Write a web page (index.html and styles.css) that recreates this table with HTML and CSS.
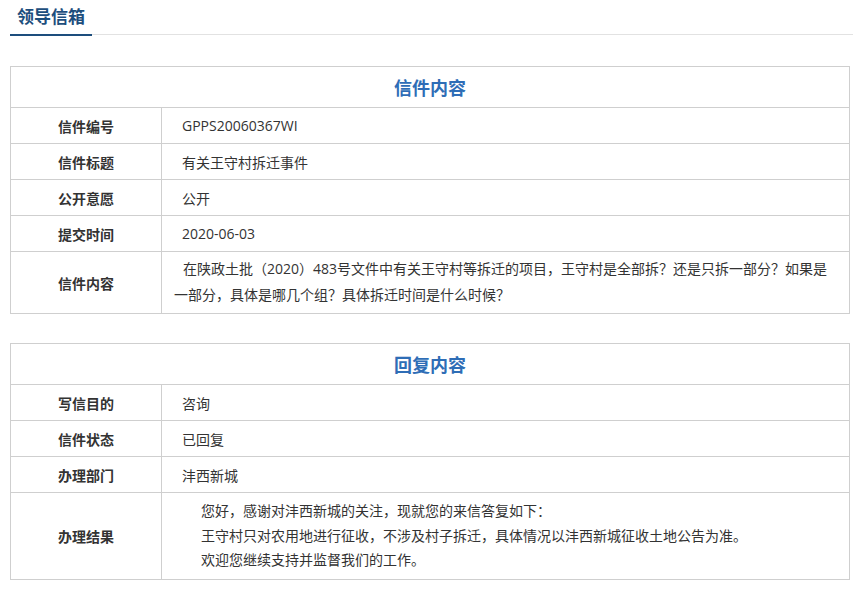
FILE: index.html
```html
<!DOCTYPE html>
<html lang="zh-CN">
<head>
<meta charset="utf-8">
<title>领导信箱</title>
<link rel="stylesheet" href="styles.css">
</head>
<body>
<div class="page">
  <div class="page-head">
    <h1 class="page-title">领导信箱</h1>
    <div class="page-rule"></div>
  </div>

  <table class="info">
    <colgroup><col class="col-label"><col class="col-value"></colgroup>
    <tr><th class="caption" colspan="2">信件内容</th></tr>
    <tr><td class="label">信件编号</td><td class="value">GPPS20060367WI</td></tr>
    <tr><td class="label">信件标题</td><td class="value">有关王守村拆迁事件</td></tr>
    <tr><td class="label">公开意愿</td><td class="value">公开</td></tr>
    <tr><td class="label">提交时间</td><td class="value">2020-06-03</td></tr>
    <tr><td class="label">信件内容</td><td class="value long"><span class="lead"></span>在陕政土批（2020）483号文件中有关王守村等拆迁的项目，王守村是全部拆？还是只拆一部分？如果是<br>一部分，具体是哪几个组？具体拆迁时间是什么时候？</td></tr>
  </table>

  <table class="info second">
    <colgroup><col class="col-label"><col class="col-value"></colgroup>
    <tr><th class="caption" colspan="2">回复内容</th></tr>
    <tr><td class="label">写信目的</td><td class="value">咨询</td></tr>
    <tr><td class="label">信件状态</td><td class="value">已回复</td></tr>
    <tr><td class="label">办理部门</td><td class="value">沣西新城</td></tr>
    <tr><td class="label">办理结果</td><td class="value reply">
      <p>您好，感谢对沣西新城的关注，现就您的来信答复如下：</p>
      <p>王守村只对农用地进行征收，不涉及村子拆迁，具体情况以沣西新城征收土地公告为准。</p>
      <p>欢迎您继续支持并监督我们的工作。</p>
    </td></tr>
  </table>
</div>
</body>
</html>
```

FILE: styles.css
```css
html, body {
  margin: 0;
  padding: 0;
  background: #ffffff;
}

body {
  font-family: "Open Sans", "Noto Sans CJK SC", sans-serif;
  color: #333333;
}

.page {
  width: 840px;
  margin-left: 10px;
}

.page-head {
  display: flex;
  align-items: flex-end;
  height: 36px;
}

.page-title {
  margin: 0;
  width: 82px;
  box-sizing: border-box;
  padding-left: 7px;
  height: 36px;
  line-height: 34px;
  font-size: 17px;
  font-weight: bold;
  color: #1d4e7d;
  border-bottom: 2px solid #1d4e7d;
  white-space: nowrap;
}

.page-rule {
  flex: 1;
  margin-right: -3px;
  height: 0;
  border-bottom: 1px solid #e2e2e2;
  margin-bottom: 1px;
}

.info {
  width: 840px;
  border-collapse: collapse;
  margin-top: 30px;
  table-layout: fixed;
}

.info.second {
  margin-top: 29px;
}

.col-label {
  width: 151px;
}

.info th,
.info td {
  border: 1px solid #cfcfcf;
  padding: 0;
}

.caption {
  height: 40px;
  font-size: 18px;
  font-weight: bold;
  color: #2e6db6;
  text-align: center;
  vertical-align: middle;
}

.label {
  height: 35px;
  text-align: center;
  font-size: 14px;
  font-weight: bold;
  color: #333333;
  vertical-align: middle;
}

.value {
  padding: 0 12px 0 20px !important;
  height: 35px;
  font-size: 14px;
  color: #333333;
  vertical-align: middle;
}

.value.long {
  padding: 4px 12px 5px 12px !important;
  line-height: 26px;
}

.lead {
  display: inline-block;
  width: 9px;
}

.value.reply {
  padding: 6px 12px 6px 12px !important;
  line-height: 24.5px;
}

.reply p {
  margin: 0;
  text-indent: 27px;
}
```
